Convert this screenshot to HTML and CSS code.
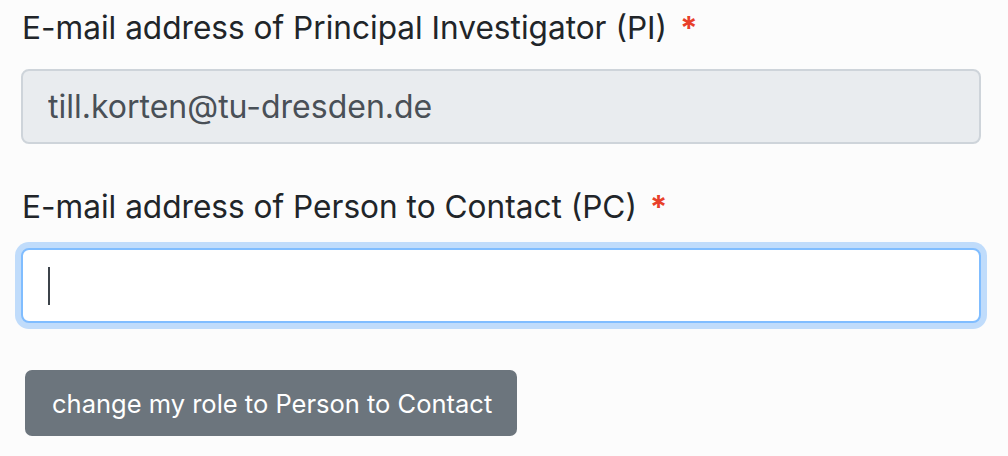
FILE: index.html
```html
<!DOCTYPE html>
<html lang="en">
<head>
<meta charset="utf-8">
<title>Contact form</title>
<link rel="stylesheet" href="styles.css">
</head>
<body>
<form class="form">
  <div class="group">
    <label class="label" for="pi">E-mail address of Principal Investigator (PI) <span class="req">*</span></label>
    <input class="input" id="pi" type="email" value="till.korten@tu-dresden.de" disabled>
  </div>
  <div class="group group-second">
    <label class="label" for="pc">E-mail address of Person to Contact (PC) <span class="req">*</span></label>
    <div class="input input-focus"><span class="caret"></span></div>
  </div>
  <div class="actions">
    <button type="button" class="btn">change my role to Person to Contact</button>
  </div>
</form>
</body>
</html>
```
FILE: styles.css
```css
html, body {
  margin: 0;
  padding: 0;
  background: #fcfcfc;
}
body {
  font-family: Inter, "Noto Sans", "Liberation Sans", sans-serif;
  color: #212529;
}
.form {
  padding: 5px 27px 0 21px;
  display: flex;
  flex-direction: column;
}
.group {
  display: flex;
  flex-direction: column;
}
.group-second {
  margin-top: 40px;
}
.label {
  font-size: 31.6px;
  line-height: 45px;
  padding-left: 1px;
  margin-bottom: 19px;
}
.req {
  color: #e8402a;
  font-weight: 700;
  margin-left: 4px;
}
.input {
  box-sizing: border-box;
  height: 75px;
  width: 100%;
  margin: 0;
  padding: 0 25px;
  font-family: inherit;
  font-size: 32px;
  color: #495057;
  background: #e9ecef;
  border: 2px solid #ced4da;
  border-radius: 8px;
  outline: none;
}
.input-focus {
  background: #ffffff;
  border-color: #80bdff;
  box-shadow: 0 0 0 6px #c0dcfb;
  display: flex;
  align-items: center;
}
.caret {
  display: block;
  width: 2px;
  height: 38px;
  background: #3c434a;
}
.actions {
  margin-top: 47px;
  padding-left: 4px;
}
.btn {
  height: 66px;
  padding: 0 25px 0 27px;
  font-family: inherit;
  font-size: 25.5px;
  color: #ffffff;
  background: #6c757d;
  border: none;
  border-radius: 7px;
}
```
